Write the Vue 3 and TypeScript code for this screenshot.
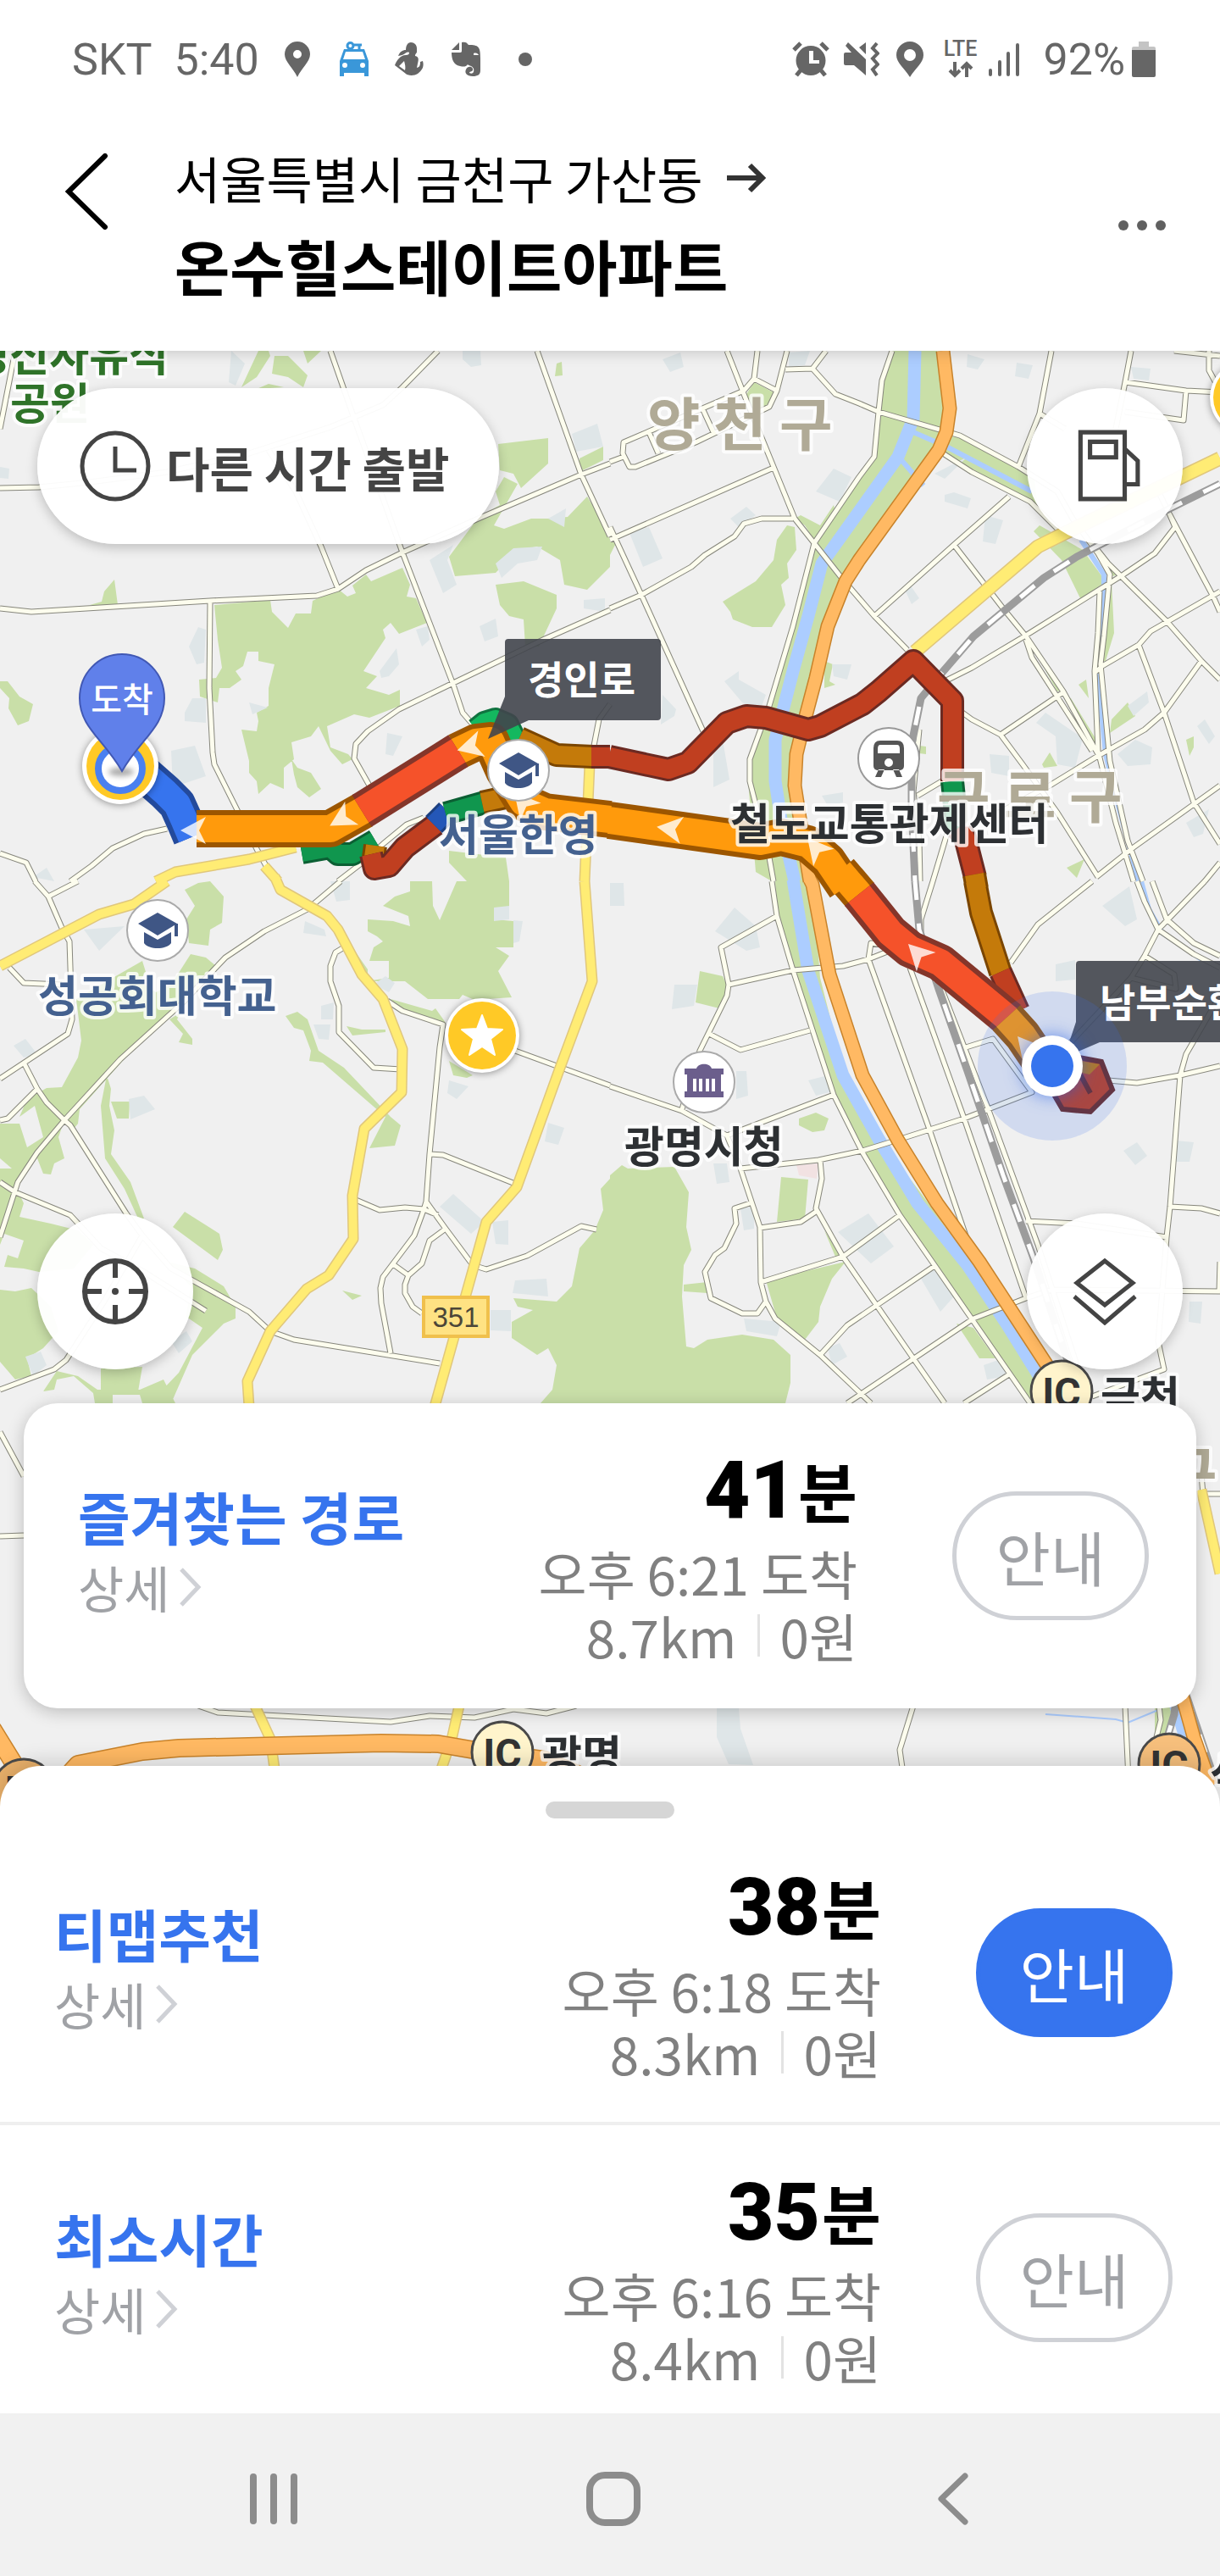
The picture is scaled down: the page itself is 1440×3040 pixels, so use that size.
<script setup lang="ts">
interface Option {
  id: string
  name: string
  minutes: string
  arrival: string
  distance: string
  fare: string
  primary: boolean
}
interface Segment {
  d: string
  fill: string
  edge: string
}
interface Place {
  x: number
  y: number
  text: string
  kind: string
}

const favourite: Option = {
  id: 'favourite', name: '즐겨찾는 경로', minutes: '41', arrival: '오후 6:21 도착', distance: '8.7km', fare: '0원', primary: false,
}
const options: Option[] = [
  { id: 'recommended', name: '티맵추천', minutes: '38', arrival: '오후 6:18 도착', distance: '8.3km', fare: '0원', primary: true },
  { id: 'fastest', name: '최소시간', minutes: '35', arrival: '오후 6:16 도착', distance: '8.4km', fare: '0원', primary: false },
]

// Each map tile stores its own local units; a projector turns "x,y x,y | x,y ..." into path data.
const tile = (ox: number, oy: number, sx: number, sy: number) => (lines: string): string =>
  lines
    .split('|')
    .map((line) => 'M' + line.trim().split(/\s+/).map((pair) => {
      const [x, y] = pair.split(',').map(Number)
      return `${Math.round(ox + x / sx)},${Math.round(oy + y / sy)}`
    }).join('L'))
    .join('')

const nw = tile(0, 400, 2.178, 2.45)
const ne = tile(720, 400, 2.178, 2.45)
const sw = tile(0, 1040, 2.178, 2.45)
const se = tile(720, 1040, 2.178, 2.45)
const bl = tile(0, 1640, 2.178, 3)
const br = tile(720, 1640, 2.178, 3)

const parks = [
  nw('695,50 660,110 620,140 650,70 665,34 690,34|705,50 740,50 790,105 780,140 740,110 700,100|780,34 825,34 790,72|690,130 730,140 660,145|295,697 302,770 230,770 262,760 268,730|0,990 20,990 50,1035 85,1055 75,1105 45,1118 22,1068 25,1040 0,1010|550,770 695,755 700,790 740,835 760,795 800,795 803,757 868,722 893,745 915,735 905,712 940,680 955,700 1035,662 1055,710 1045,745 1070,750 1098,820 1025,852 1005,820 985,840 990,865 935,960 970,975 940,1010 1000,1030 1027,1015 1027,1060 950,1095 910,1085 840,1120 850,1180 895,1200 905,1215 880,1230 850,1190 820,1120 800,1150 750,1165 755,1215 730,1240 730,1300 695,1285 665,1315 660,1280 640,1255 640,1220 620,1130 660,1135 665,1105 660,1080 690,1060 690,1010 705,940 665,930 665,905 635,905 625,945 605,960 620,985 590,1010 565,1010 560,1050 515,1035 512,985 555,980 570,950 560,870|750,1215 765,1240 800,1255 825,1300 795,1325 765,1295 755,1260|1280,305 1410,287 1410,360 1340,430 1320,390 1285,380|1490,345 1550,310 1550,350 1490,385|1180,590 1230,515 1285,480 1275,440 1295,400 1330,420 1270,540 1295,550 1365,520 1410,520 1460,515 1510,455 1568,560 1568,660 1510,725 1450,710 1440,640 1380,600 1330,610 1275,675 1170,685 1155,630|1275,710 1345,700 1430,740 1432,780 1385,890 1350,890 1345,810 1310,800 1285,770|1430,70 1445,65 1447,105 1427,108|1155,1480 1300,1500 1310,1568 1200,1568 1155,1515'),
  ne('725,34 700,120 690,210 680,340 640,400 525,590 470,830 410,1060 360,1215 355,1280 375,1540 415,1568 500,1568 490,1530 470,1290 500,1100 565,840 600,700 640,640 855,320 880,260 865,180 840,34|290,760 375,700 420,640 430,580 455,540 475,545 480,610 455,650 460,690 440,710 450,770 415,833 365,833 315,810 310,790|370,125 420,155 400,200 370,220 350,160|490,510 540,540 575,480 580,500 525,580 500,540 475,520|870,280 910,290 1090,390 1100,490 1020,440 930,385 860,330|1090,555 1105,540 1215,610 1275,700 1210,755 1160,640|1290,700 1295,850 1275,930 1262,930|1290,1100 1330,1050 1350,1090 1285,1140|1110,1230 1130,1195 1150,1235 1115,1240|1480,1160 1500,1150 1500,1180 1490,1205|1175,1530 1220,1505 1200,1558|0,585 15,590 0,625|550,930 572,940 565,990 580,1000 550,1010|1205,1000 1225,985 1230,1040|1085,890 1105,915 1165,1015 1150,1020|1170,1035 1185,1040 1250,1160 1245,1180|795,1175 812,1178 812,1200 795,1198|1280,655 1305,680 1280,690'),
  sw('475,25 510,5 540,0 575,45 570,120 540,140 535,185 485,180 480,110 500,70|365,230 375,262 360,290 400,320 440,300 490,210 530,220 555,245 530,275 330,500 205,660 200,700 190,715 165,690 150,740 165,800 140,815 130,848 110,845 95,800 60,830 40,880 60,930 50,970 130,990 200,1010 240,1050 190,1120 100,1130 60,1120 10,1115 20,1080 45,1090 60,1040 10,1020 0,1050 0,830 30,830 0,800 0,700 50,700 70,770 110,740 90,650 50,680 70,630 120,597 160,595 200,510 210,460 195,340 320,260|435,400 465,380 455,400 495,455 495,473 460,465 470,440|275,560 285,600 280,650 295,720 285,790 335,870 370,975 355,975 320,890 270,800 260,650|285,637 333,637 330,685 300,685|475,955 565,1020 572,1065 560,1095 445,1000|430,1100 500,1120 575,1170 605,1230 605,1265 575,1280 495,1370 440,1508 400,1508 410,1480 460,1420 520,1290 480,1260 490,1170|0,1180 40,1185 80,1175 130,1230 150,1300 110,1350 70,1380 80,1430 40,1440 0,1390|260,1408 365,1405 355,1475 260,1480|145,1415 200,1430 250,1470 360,1470 420,1440 450,1508 365,1508 360,1485 290,1485 290,1508 245,1508 240,1480 190,1430 145,1440 140,1470 110,1475|735,390 765,378 790,400 820,490 885,540 1005,680 1030,705 1015,765 950,772 990,680 830,525 795,520 800,490 780,430 755,425|890,420 930,428 990,428 990,435 905,445|915,205 945,255 945,280 920,240|1005,340 1110,375 1120,368 1145,410 1030,370|1055,0 1110,0 1112,70 1130,112 1175,0 1310,0 1310,75 1270,80 1270,110 1320,115 1320,190 1275,190 1308,215 1280,260 1315,335 1220,342 1190,328 1180,340 1100,340 1040,290 940,290 1000,280 1000,230 950,230 960,190 985,175 970,160 945,145 945,110 1010,115 1055,130 1050,100 985,70 1015,45 1055,30|1155,520 1215,560 1200,568 1165,560|1568,860 1545,890 1550,950 1530,1010 1490,1060 1470,1170 1430,1215 1320,1205 1330,1230 1370,1240 1315,1275 1315,1320 1380,1370 1410,1350 1430,1400 1420,1470 1390,1508 1568,1508|880,1183 930,1198 905,1210'),
  se('425,0 430,100 470,250 575,620 650,785 745,970 835,1115 940,1270 1080,1508 1150,1480 1100,1400 900,1060 820,930 690,740 600,540 540,280 520,0|0,850 30,820 45,830 165,825 203,900 195,1000 210,1065 190,1110 185,1200 195,1345 215,1350 250,1325 340,1310 420,1325 465,1370 465,1450 450,1508 0,1508|400,1155 605,1100 570,1150 540,1230 535,1275 500,1325 430,1265|440,855 510,862 500,975 430,985|230,260 290,275 305,310 290,370 220,350|485,685 530,670 562,685 550,720 520,725 485,705|890,1280 935,1290 990,1380 950,1380|190,1165 250,1160 250,1190 190,1185|550,1010 595,1085 580,1085'),
  br('1400,1120 1460,1120 1440,1230 1400,1230'),
].join('')

const blocks = [
  nw('595,34 630,70 605,135 588,125|1190,34 1235,34 1237,75 1210,82 1190,60|1470,275 1535,245 1550,310 1480,325|1105,640 1165,595 1150,640 1175,710 1140,735|1275,650 1320,605 1395,600 1380,640 1330,650 1290,690|510,832 530,840 525,935 505,940 485,890|1232,830 1275,808 1280,860 1245,875|1500,755 1555,750 1555,790 1500,780|440,1190 500,1175 530,1265 445,1295|975,960 1020,895 1025,940 1000,975 980,980|640,1050 688,1065 650,1085|995,1140 1035,1150 1010,1205 990,1200|475,1080 495,1040 530,1040 530,1110 475,1105|1070,840 1100,830 1105,870 1085,890|0,370 25,375 22,405 0,403|85,1555 120,1530 140,1568|1410,520 1455,490 1450,545'),
  ne('135,60 180,40 190,80 155,95|920,45 962,60 945,88 918,80|1045,68 1087,75 1075,115 1040,108|575,375 620,400 590,470 530,440|860,450 885,443 928,460 920,490 860,470|965,510 1010,525 990,592 958,585|50,560 100,545 135,635 85,658|310,520 350,485 375,510 330,545|755,720 770,710 795,750 775,768|295,990 330,960 330,985 400,1030 385,1075 340,1050|265,1190 290,1160 308,1275 265,1295|1095,1110 1120,1080 1215,1155 1195,1240 1150,1230 1145,1150|1330,1060 1380,1020 1385,1050 1345,1090|1480,1400 1540,1360 1525,1430 1500,1440|975,1200 1025,1205 1025,1265 980,1255|135,1030 170,1070 165,1090 130,1115|570,940 620,940 610,985 575,975|545,1320 600,1310 600,1340 560,1350|1340,80 1390,85 1385,120 1345,115|1510,1120 1530,1100 1555,1150 1540,1170|1305,1200 1350,1160 1395,1180 1390,1230 1330,1235|460,40 515,34 500,75 460,80|835,390 920,340 860,405'),
  sw('215,140 320,130 255,200|1130,940 1165,905 1245,985 1210,1020|1270,75 1310,70 1310,110 1270,115|1155,575 1205,592 1175,630 1150,612|1265,985 1307,980 1307,1050 1275,1048|1325,1155 1405,1150 1410,1200 1318,1190|1262,1240 1313,1240 1313,1300 1262,1298|1410,698 1450,712 1435,762 1400,752|805,415 850,415 845,458 820,455|330,630 370,620 398,660 335,688|960,300 990,275 1015,295 1000,320|35,475 65,455 95,500 60,510|65,1375 105,1360 120,1400 85,1430|785,115 835,140 838,160 780,150|440,1330 480,1300 495,1330 460,1365|825,360 858,350 855,400 825,400|850,0 900,0 900,55 865,60|1320,112 1343,115 1335,175 1320,178'),
  se('320,75 375,130 385,190 350,200 270,145|0,5 35,5 38,70 0,70|165,300 225,300 215,360 160,370|585,1015 665,960 730,1055 670,1105|800,1150 835,1115 885,1200 850,1245|1265,70 1335,15 1355,110 1325,130|1145,240 1195,228 1195,285 1145,290|1320,780 1355,755 1380,795 1350,820|1455,750 1500,755 1490,810 1455,810|1490,1215 1522,1215 1518,1280 1488,1275|345,1265 440,1275 430,1315 350,1300|325,550 350,548 355,620 325,630|510,575 560,560 565,610 530,620|265,815 300,815 308,870 275,875|960,1400 1010,1380 1020,1430 970,1440|560,1350 590,1335 610,1375 570,1400|335,945 370,940 370,1005 345,1010'),
  br('275,1128 330,1128 335,1200 368,1330 305,1325 275,1230'),
].join('')

const streets = [
  nw('40,34 0,260|0,430 100,428 230,415 430,385 640,330 850,255 985,190 1035,140 1125,34|850,34 908,222 1035,618 1165,1000 1190,1080 1215,1115|1380,34 1495,392 1568,570|0,778 80,790 540,757 815,743 868,722 940,668 1035,618 1240,515 1495,392 1568,360|690,320 760,440 825,600 868,722|541,757 538,1010 546,1195 550,1230 660,1475 690,1535|1568,785 1400,868 1165,995 1025,1070 945,1135 915,1170 911,1212 950,1290|1568,1055 1540,1100 1527,1175|430,1415 370,1432 290,1472 235,1525 180,1568|0,1487 68,1515 92,1568|1090,1385 1045,1405 985,1460 925,1520 870,1568'),
  ne('725,34 700,120 690,210 680,340 640,400 525,590 470,830 410,1060 360,1215 360,1280 410,1500 420,1568|300,34 345,160 475,520 525,590 600,695 680,800 765,900|380,34 370,115 430,150|370,115 345,150 35,300 32,330 50,370 65,370 220,300 410,195 430,150 455,34|450,88 520,86 580,160 640,185 690,210 900,280 1050,370 1150,440 1190,520 1255,620|520,86 555,34|240,205 265,270|100,270 125,330|0,355 35,340|855,330 930,385 1080,470 1160,560|420,372 0,580|0,545 80,740 240,1135|0,780 80,740 210,660 245,625 320,570 345,535 390,520 470,520|1025,455 885,595 680,800|885,595 1010,780 1070,860 1165,1020 1255,1200|1135,34 1105,215 1050,370|1105,215 1170,260|1340,34 1325,125 1300,260|1325,125 1480,150 1568,155|1480,150 1475,235 1325,210|1540,34 1540,90 1568,150|1450,34 1568,50|1440,510 1453,545 1400,620 1320,680 1065,860 930,950 860,990|1240,590 1280,650 1430,815 1520,930 1568,985|1400,420 1440,510 1550,745 1568,790|1568,730 1390,845 1360,885 1265,945 1245,965|1255,620 1285,680 1270,860 1260,940 1285,1220 1330,1450 1370,1568|1258,730 1255,850 1245,960 1255,1190 1300,1400 1345,1568|1360,885 1425,1080 1500,1340 1568,1460|1520,930 1425,1080 1375,1130 1255,1205 1130,1290 1000,1370|1005,1145 1165,1022|905,1080 930,1100 1005,1145 1060,1230 1150,1370 1255,1555|1568,1290 1345,1470 1250,1555|790,1320 860,1275|1070,870 1085,920 1240,1190|795,1130 780,1310 795,1450 798,1568|1568,1515 1530,1568|870,1420 830,1568'),
  sw('90,0 125,45 160,135 178,175 185,400 175,440 0,570|125,45 200,0|25,250 60,293 160,300|60,525 95,600 120,640 165,690 180,705 325,960 365,1025 440,1120 640,1245 695,1300 755,1325 1130,1393|95,600 20,685 0,690|875,0 790,80 680,145 580,220 470,350 310,515 165,690 95,785 45,870 0,1030|0,870 40,900 180,965 260,1060 370,1130 530,1243|0,1470 140,1410 170,1385 270,1210 365,1025|885,190 862,205 850,245 850,290 872,360 872,435 960,540 1030,543|995,345 1035,375 1140,415 1130,480 1105,790 1095,925 1090,950 1065,1025 985,1145 978,1175 980,1220 1003,1365|1105,790 1140,792 1325,875|915,920 975,950 1040,943 1090,947 1125,965|1095,925 1145,1005 1215,1110 1250,1122 1355,1083 1495,998 1533,1006|1145,1005 1105,1040 1085,1105 1050,1140 1040,1165 1040,1190 1060,1230 1085,1250|1010,1108 1050,1140|1325,490 1568,590'),
  se('415,0 430,100 470,258 575,618 650,785 745,965 835,1110 1080,1508|430,100 285,190 305,300 300,330 230,490 185,660|305,300 470,258 600,245 665,225 740,190|255,440 335,488 515,430|0,592 185,665 300,735 575,618|300,735 335,830 385,1000 387,1160 400,1215 425,1265 540,1370 670,1508|335,830 535,805 650,780 735,750 910,685 1085,610 985,455 915,480|540,805 545,860 530,945 600,1085 780,1380 860,1508|360,930 320,945 325,990 295,1060 270,1080 245,1130 260,1205 340,1250 380,1250 400,1215|385,1003 490,985 530,955|387,1160 600,1085 745,965|835,1112 610,1285 540,1370|610,1508 935,1265 1070,1205 1135,1180 1568,1185|1025,1425 910,1508|740,190 670,180 665,225 820,710 925,1060|770,250 910,685 1070,1205|830,0 800,110 800,170|845,290 970,650 1100,1050 1200,1400|1070,983 1200,990 1430,1030|1355,0 1375,60 1410,140 1500,210 1568,250|1530,0 1410,140 1375,215 1340,280 1180,470|1375,215 1450,270 1455,310 1340,280|1240,0 1100,125 1030,235|1280,575 1355,583 1465,560 1568,535|1568,330 1480,500 1465,560 1440,940 1430,1030 1410,1330 1425,1410 1240,1490|1440,940 1520,945 1568,960|1568,1100 1565,1185|1395,0 1430,110 1500,180 1568,215'),
  bl('0,150 60,305|0,520 60,515|510,1120 560,1142 1005,1175 1105,1155 1220,1162 1320,1132 1405,1145 1480,1120'),
  br('1520,300 1525,370 1568,370|780,1120 745,1275 755,1380|1325,1120 1332,1380|1412,1120 1415,1170 1405,1230'),
].join('')

const avenues = [
  nw('400,1568 450,1542 640,1505 760,1470|680,1525 715,1568|1515,1230 1503,1568'),
  sw('430,0 345,65 255,95 0,245|705,-15 720,25 840,100 870,140 930,270 985,340 1035,485 1032,610 937,715 905,910 908,1035 845,1140 788,1178 695,1300 635,1445 640,1520|1503,0 1522,290 1440,540 1328,885 1250,985 1118,1520'),
  bl('655,1120 695,1235 705,1340 700,1380|1180,1120 1160,1240 1130,1360'),
  br('1520,355 1568,650'),
].join('')
const boulevard = ne('785,905 1100,600 1170,560 1568,345')

const highways = [
  ne('855,34 873,200 865,270 845,320 640,640 605,700 560,830 530,980 500,1100 480,1200 475,1290 500,1480 515,1568'),
  se('515,-5 520,10 565,270 650,560 740,750 840,930 950,1100 1130,1410'),
  br('1440,960 1475,1100 1500,1230 1545,1400'),
].join('')
const expressways = bl('150,1400 200,1325 365,1280 460,1270 980,1250 1125,1255 1240,1280 1400,1310 1500,1370|-20,1200 60,1380')

const river = [
  ne('783,34 780,230 740,340 545,650 510,800 470,960 425,1160 425,1280 445,1420 475,1568'),
  se('470,-5 510,260 600,560 690,745 790,930 920,1110 1020,1280 1120,1460'),
  br('1450,1100 1485,1260'),
].join('')
const creeks = [
  ne('780,270 865,310 1085,440|1210,580 1270,680 1270,740 1255,900 1255,980 1275,1200 1305,1340 1360,1568|750,350 805,425'),
  se('1365,0 1385,80 1420,150 1520,225'),
].join('')
const brooks = br('1120,1150 1300,1168 1330,1180 1410,1135')
const rails = [
  ne('1568,420 1440,490 1200,630 1115,690 935,860 850,970 800,1040 775,1170 775,1350 785,1568'),
  se('785,0 795,140 845,310 920,550 1010,850 1090,1090 1180,1400'),
  br('1460,1040 1450,1150 1430,1240|1480,1080 1560,1400'),
].join('')

const RED = { fill: '#c03f20', edge: '#6b2a22' }
const AMBER = { fill: '#c47a0a', edge: '#7a4500' }
const GREEN = { fill: '#10964e', edge: '#0b5f33' }
const alternate: Segment[] = [
  { d: nw('775,1485 850,1470 870,1490 905,1490 965,1450'), ...GREEN },
  { d: nw('965,1465 960,1500'), ...AMBER },
  { d: nw('955,1490 962,1532 1000,1525 1040,1470 1120,1405'), ...RED },
  { d: nw('1115,1405 1150,1365'), fill: '#2457b8', edge: '#1c3f80' },
  { d: nw('1145,1372 1245,1340'), ...GREEN },
  { d: nw('1240,1340 1310,1322'), ...AMBER },
  { d: nw('1225,1130 1245,1110 1275,1100 1305,1115 1320,1150 1300,1190'), fill: '#14b85f', edge: '#0f7340' },
  { d: nw('1335,1155 1430,1203 1525,1207'), ...AMBER },
  { d: nw('1520,1207 1568,1207') + ne('-2,1207 150,1245 200,1225 300,1110 350,1090 400,1095 510,1130 540,1120 650,1055 690,1020 780,930 880,1045 880,1280'), ...RED },
  { d: ne('880,1280 892,1420'), ...GREEN },
  { d: ne('892,1415 912,1440 938,1555'), ...RED },
  { d: ne('936,1548 944,1590') + se('938,0 955,90 1005,265'), ...AMBER },
  { d: se('1005,262 1050,375'), ...RED },
]
const ORANGE = { fill: '#ff9a0c', edge: '#9c5600' }
const SCARLET = { fill: '#f5522a', edge: '#84362a' }
const selected: Segment[] = [
  { d: nw('370,1258 425,1310 455,1345 475,1395 492,1440'), fill: '#3674ee', edge: '#234a9c' },
  { d: nw('505,1417 850,1415 935,1362'), ...ORANGE },
  { d: nw('1175,1192 1225,1165 1262,1162 1295,1250 1345,1340 1400,1368 1568,1390') + ne('-2,1391 385,1453 440,1440 510,1460 560,1510 605,1585') + se('590,-30 642,40'), ...ORANGE },
  { d: nw('930,1365 1178,1190'), ...SCARLET },
  { d: se('640,37 720,150 770,195 850,235 1025,400'), ...SCARLET },
  { d: se('1020,395 1060,445 1110,530'), ...ORANGE },
]
const arrows = [
  { x: 230, y: 980, r: 0 },
  { x: 404, y: 966, r: -30 },
  { x: 556, y: 881, r: -15 },
  { x: 618, y: 948, r: 50 },
  { x: 792, y: 978, r: 8 },
  { x: 964, y: 1002, r: 50 },
  { x: 1084, y: 1126, r: 45 },
  { x: 1212, y: 1236, r: 50 },
]
const places: Place[] = [
  { x: 199, y: 438, text: '경신자유식', kind: 'park end' },
  { x: 12, y: 495, text: '공원', kind: 'park' },
  { x: 764, y: 526, text: '양 천 구', kind: 'district' },
  { x: 1106, y: 965, text: '구 로 구', kind: 'district' },
  { x: 1374, y: 1764, text: '구', kind: 'district' },
  { x: 862, y: 991, text: '철도교통관제센터', kind: 'poi' },
  { x: 518, y: 1004, text: '서울한영', kind: 'school' },
  { x: 45, y: 1194, text: '성공회대학교', kind: 'school' },
  { x: 737, y: 1372, text: '광명시청', kind: 'poi' },
  { x: 1299, y: 1667, text: '금천', kind: 'poi' },
  { x: 640, y: 2091, text: '광명', kind: 'poi' },
  { x: 1428, y: 2112, text: '석수', kind: 'poi' },
]
const junctions = [
  { x: 1253, y: 1642, fill: '#fff4cc' },
  { x: 593, y: 2068, fill: '#fff4cc' },
  { x: 28, y: 2112, fill: '#e9b06a' },
  { x: 1380, y: 2082, fill: '#f6bf7c' },
]
const stars = [{ x: 569, y: 1222 }, { x: 1472, y: 469 }]
const schools = [{ x: 612, y: 909 }, { x: 186, y: 1098 }]
</script>

<template>
  <div class="screen">
    <div class="status">
      <span class="carrier">SKT</span>
      <span class="clock">5:40</span>
      <svg class="s-pin" width="30" height="42" viewBox="0 0 30 42"><path fill-rule="evenodd" d="M15 0a15 15 0 0 1 15 15c0 9-10 16-15 27C10 31 0 24 0 15A15 15 0 0 1 15 0zm0 10a5 5 0 1 0 0 10 5 5 0 0 0 0-10z" /></svg>
      <svg class="s-car" width="34" height="42" viewBox="0 0 34 42"><path fill="none" stroke="#3a97d9" stroke-width="3" d="M9 5a3.500 3.500 0 1 0 7 0 3.500 3.500 0 0 0-7 0M15 4h11M23 4v5" /><path fill="#3a97d9" fill-rule="evenodd" d="M5 9h24l5 14v18h-5v-4H5v4H0V23zM7 12 4 21h26l-3-9zM6 25a3 3 0 1 0 0 6 3 3 0 0 0 0-6zm21 0a3 3 0 1 0 0 6 3 3 0 0 0 0-6z" /></svg>
      <svg class="s-person" width="36" height="42" viewBox="0 0 36 42"><path d="M19 1c4 0 7 3 7 7v4c0 2-2 2-2 5 5 1 4 5 3 9l-1 5c4-1 4-4 4-7l3-1c2 7-1 11-6 15-4 3-13 2-14 0L0 28c2-5 6-12 13-12 3 0 4-1 4-3-4-2-4 3-13 4 2-5 5-7 9-7 0-5 2-9 6-9zM11 23l-6 6 7 5c1-4 0-7-1-11z" /></svg>
      <svg class="s-elephant" width="36" height="42" viewBox="0 0 36 42"><path d="M10 1v9H1zM13 1c4-1 6 0 8 3 12 0 14 2 14 16v14c0 5-3 7-9 7-7 0-10-4-8-8 2-5 9-4 8 1-1 2-4 1-4 3 4 2 6-1 5-5-2-4-5-3-7-5-2 3-5 3-9 2C3 28 1 20 1 13h10c2 0 2-1 2-3zM27 14v2h6c-1-2-3-3-6-2z" /></svg>
      <svg class="s-dot" width="16" height="16" viewBox="0 0 16 16"><circle cx="8" cy="8" r="8" /></svg>
      <div class="status-right">
        <svg width="44" height="42" viewBox="0 0 44 42"><path fill-rule="evenodd" d="M22 5a17 17 0 1 1 0 35 17 17 0 0 1 0-35zm-2 6v15h12v-4h-7V11z" /><path stroke="#666" stroke-width="5" d="M2 10 10 2M42 10 34 2M10 34l-5 6M34 34l5 6" /></svg>
        <svg class="s-mute" width="42" height="42" viewBox="0 0 42 42"><path d="M0 15q0-2 2-2h7l-7-8 3-4 21 20v19L12 28H2q-2 0-2-2zM18 7l8-6v14z" /><path fill="none" stroke="#666" stroke-width="4" d="m39 2-5 6 6 6-6 6 6 7-6 6 5 7" /></svg>
        <svg class="s-pin2" width="32" height="42" viewBox="0 0 32 42"><path fill-rule="evenodd" d="M16 0a16 16 0 0 1 16 16c0 9-9 15-16 26C9 31 0 25 0 16A16 16 0 0 1 16 0zm0 9a7 7 0 1 0 0 14 7 7 0 0 0 0-14z" /></svg>
        <div class="lte"><span>LTE</span><svg width="30" height="20" viewBox="0 0 30 20"><path fill="none" stroke="#666" stroke-width="4" d="M8 1v15M2 11l6 6 6-6M22 19V4M16 9l6-6 6 6" /></svg></div>
        <svg class="s-signal" width="36" height="42" viewBox="0 0 36 42"><path stroke="#666" stroke-width="4" stroke-linecap="round" d="M2 34v5M13 24v15M23 14v25M34 4v35" /></svg>
        <span class="percent">92%</span>
        <svg class="s-battery" width="28" height="42" viewBox="0 0 28 42"><path fill="#c4c4c4" d="M8 0h12v6h6q2 0 2 2v4H0V8q0-2 2-2h6z" /><path d="M0 10h28v30q0 2-2 2H2q-2 0-2-2z" /></svg>
      </div>
    </div>

    <header class="trip">
      <button class="back" aria-label="뒤로"><svg width="52" height="90" viewBox="0 0 52 90"><path fill="none" stroke="#000" stroke-width="6" stroke-linecap="round" d="M48 3 5 45l43 42" /></svg></button>
      <div class="places">
        <p class="origin">서울특별시 금천구 가산동<svg width="46" height="36" viewBox="0 0 46 36"><path fill="none" stroke="#333" stroke-width="6" d="M0 18h40M27 3l15 15-15 15" /></svg></p>
        <h1>온수힐스테이트아파트</h1>
      </div>
      <button class="more" aria-label="더보기"><svg width="58" height="14" viewBox="0 0 58 14"><circle cx="7" cy="7" r="6" /><circle cx="29" cy="7" r="6" /><circle cx="51" cy="7" r="6" /></svg></button>
    </header>

    <main class="map">
      <svg class="canvas" viewBox="0 414 1440 1718" preserveAspectRatio="xMidYMin slice" role="img" aria-label="경로 지도">
        <path :d="parks" fill="#c9dfa8" />
        <path :d="blocks" fill="#dfe6e8" />
        <path d="M940 1375l26-2-2 18-21-4z" fill="#f2e2e2" />
        <g fill="none" stroke-linejoin="round">
          <path :d="creeks" stroke="#accdff" stroke-width="6" />
          <path :d="brooks" stroke="#accdff" stroke-width="2" />
          <path :d="river" stroke="#accdff" stroke-width="15" />
          <path :d="streets" stroke="#86867c" stroke-width="7" />
          <path :d="streets" stroke="#fdfdee" stroke-width="5" />
          <path :d="boulevard" stroke="#e0c77c" stroke-width="17" />
          <path :d="boulevard" stroke="#ffec74" stroke-width="14" />
          <path :d="rails" stroke="#9c9c9c" stroke-width="9" />
          <path :d="rails" stroke="#fff" stroke-width="5" stroke-dasharray="22 28" />
          <path :d="avenues" stroke="#e0c77c" stroke-width="13" />
          <path :d="avenues" stroke="#ffec74" stroke-width="10" />
          <path :d="highways" stroke="#c8832b" stroke-width="17" />
          <path :d="highways" stroke="#ffb963" stroke-width="14" />
          <path :d="expressways" stroke="#c8832b" stroke-width="22" />
          <path :d="expressways" stroke="#ffb963" stroke-width="19" />
          <g v-for="(s, i) in alternate" :key="'a' + i">
            <path :d="s.d" :stroke="s.edge" stroke-width="28" />
            <path :d="s.d" :stroke="s.fill" stroke-width="22" />
          </g>
        </g>
        <path d="M1243 1290l11 19 33 3 26-26-13-33-26-5z" fill="#c03f20" stroke="#6b2a22" stroke-width="6" />
        <path d="M1270 1251l28 5-12 12-18-4z" fill="#c47a0a" />
        <path d="M1275 1268l12 22" stroke="#6b2a22" stroke-width="6" />
        <g fill="none" stroke-linejoin="round">
          <g v-for="(s, i) in selected" :key="'s' + i">
            <path :d="s.d" :stroke="s.edge" stroke-width="44" />
            <path :d="s.d" :stroke="s.fill" stroke-width="32" />
          </g>
        </g>
        <path v-for="(a, i) in arrows" :key="'w' + i" d="M-17 0 13-16 5 0l8 16z" fill="#fff" fill-opacity=".8" :transform="`translate(${a.x} ${a.y}) rotate(${a.r})`" />

        <g v-for="j in junctions" :key="'j' + j.x">
          <circle :cx="j.x" :cy="j.y" r="36" :fill="j.fill" stroke="#4a4a4a" stroke-width="3" />
          <text class="junction" :x="j.x" :y="j.y + 18">IC</text>
        </g>
        <text v-for="p in places" :key="p.text + p.x" class="place" :class="p.kind" :x="p.x" :y="p.y">{{ p.text }}</text>

        <rect x="500" y="1531" width="76" height="46" fill="#ffe283" stroke="#f0c04c" stroke-width="4" />
        <text class="road-no" x="538" y="1566">351</text>

        <g v-for="s in schools" :key="'sc' + s.x" :transform="`translate(${s.x} ${s.y})`">
          <circle r="36" fill="#fff" stroke="#aaa" stroke-width="2" />
          <path fill="#3f5685" d="M0-21 23-8 0 6-23-8zM-16 2 0 11 16 2v13c-6 8-26 8-32 0z" />
          <path fill="none" stroke="#3f5685" stroke-width="4" d="M22-8V7" />
        </g>
        <g transform="translate(1049 895)">
          <circle r="36" fill="#fff" stroke="#999" stroke-width="2" />
          <path fill="#555" fill-rule="evenodd" d="M-10-21h20q8 0 8 9V9q0 5-6 5h-24q-6 0-6-5v-21q0-9 8-9zM-10-16q-3 0-3 5v5h26v-5q0-5-3-5zM0 0a5 5 0 1 0 0 10 5 5 0 0 0 0-10zM-12 13h7l-4 9h-7zM12 13H5l4 9h7z" />
        </g>
        <g transform="translate(831 1277)">
          <circle r="36" fill="#fff" stroke="#aaa" stroke-width="2" />
          <path fill="#6b5e8c" d="M-9-16C-7-23 7-23 9-16h14v7h-3V11h3v7h-46v-7h3V-9h-3v-7z" />
          <path stroke="#fff" stroke-width="4" d="M-11-4V11M-4-4V11M4-4V11M11-4V11" />
        </g>
        <g v-for="s in stars" :key="'st' + s.x" :transform="`translate(${s.x} ${s.y})`">
          <circle class="lift" r="44" fill="#fff" />
          <circle r="40" fill="#ffc926" />
          <path fill="#fff" stroke="#fff" stroke-width="2" stroke-linejoin="round" d="M0-24 6-8l18 1L10 4l5 19L0 13l-15 10 5-19L-24-7l18-1z" />
        </g>

        <circle class="lift" cx="142" cy="904" r="45" fill="#fff" />
        <circle cx="142" cy="904" r="40" fill="#ffc926" />
        <circle cx="142" cy="907" r="26" fill="#fff" stroke="#4a80f0" stroke-width="8" />
        <ellipse class="soft" cx="143" cy="911" rx="15" ry="5" fill="#aaa" />
        <path fill="#6080ea" stroke="#4158b4" stroke-width="2" d="M144 772c28 0 50 23 50 52 0 34-28 48-50 86-22-38-50-52-50-86 0-29 22-52 50-52z" />
        <text class="pin-text" x="144" y="840">도착</text>

        <path class="tip" d="M600 754h176q4 0 4 4v88q0 4-4 4H624l-48 22 20-50v-64q0-4 4-4z" />
        <text class="tip-text" x="623" y="819">경인로</text>
        <path class="tip" d="M1274 1134h186v96h-162l-42 18 14-42v-68q0-4 4-4z" />
        <text class="tip-text" x="1298" y="1200">남부순환로</text>

        <circle cx="1242" cy="1258" r="88" fill="#3c73ee" fill-opacity=".17" />
        <circle class="glow" cx="1242" cy="1258" r="36" fill="#fff" />
        <circle cx="1242" cy="1258" r="25" fill="#3674ee" />
      </svg>

      <div class="controls">
        <button class="depart"><svg width="84" height="84" viewBox="0 0 84 84"><circle cx="42" cy="42" r="39" fill="none" stroke="#444" stroke-width="5" /><path fill="none" stroke="#444" stroke-width="5" d="M42 19v28h25" /></svg>다른 시간 출발</button>
        <button class="round" aria-label="주유소"><svg width="84" height="88" viewBox="-10 -1 82 86"><path fill="none" stroke="#444" stroke-width="5" d="M3 3h51v77H3zM14 14h30v18H14zM54 22l15 14v27H54" /></svg></button>
      </div>
      <div class="controls lower">
        <button class="round" aria-label="현재 위치"><svg width="80" height="80" viewBox="0 0 80 80"><circle cx="40" cy="40" r="36" fill="none" stroke="#444" stroke-width="6" /><circle cx="40" cy="40" r="4" fill="#444" /><path stroke="#444" stroke-width="6" d="M40 4v20M40 56v20M4 40h20M56 40h20" /></svg></button>
        <button class="round" aria-label="지도 레이어"><svg width="78" height="80" viewBox="0 0 78 80"><path fill="none" stroke="#444" stroke-width="5" d="M39 4 72 30 39 56 6 30zM3 46l36 31 36-31" /></svg></button>
      </div>

      <article class="option favourite">
        <div class="label">
          <h2>{{ favourite.name }}</h2>
          <a href="#detail">상세<svg width="28" height="46" viewBox="0 0 28 46"><path fill="none" stroke="#cfd1d6" stroke-width="5" d="m3 2 20 21L3 44" /></svg></a>
        </div>
        <div class="figures">
          <p class="time"><b>{{ favourite.minutes }}</b>분</p>
          <p>{{ favourite.arrival }}</p>
          <p class="cost"><span>{{ favourite.distance }}</span><span class="bar"></span><span>{{ favourite.fare }}</span></p>
        </div>
        <button class="go">안내</button>
      </article>
    </main>

    <section class="sheet">
      <div class="grip"></div>
      <article v-for="o in options" :key="o.id" class="option">
        <div class="label">
          <h2>{{ o.name }}</h2>
          <a href="#detail">상세<svg width="28" height="46" viewBox="0 0 28 46"><path fill="none" stroke="#cfd1d6" stroke-width="5" d="m3 2 20 21L3 44" /></svg></a>
        </div>
        <div class="figures">
          <p class="time"><b>{{ o.minutes }}</b>분</p>
          <p>{{ o.arrival }}</p>
          <p class="cost"><span>{{ o.distance }}</span><span class="bar"></span><span>{{ o.fare }}</span></p>
        </div>
        <button class="go" :class="{ primary: o.primary }">안내</button>
      </article>
    </section>

    <nav class="keys">
      <button aria-label="최근 앱"><svg width="58" height="62" viewBox="0 0 58 62"><path stroke="#8c8c8c" stroke-width="8" stroke-linecap="round" d="M5 5v52M29 5v52M53 5v52" /></svg></button>
      <button aria-label="홈"><svg width="64" height="64" viewBox="0 0 64 64"><rect x="4" y="4" width="56" height="56" rx="18" fill="none" stroke="#8c8c8c" stroke-width="8" /></svg></button>
      <button aria-label="이전"><svg width="38" height="62" viewBox="0 0 38 62"><path fill="none" stroke="#8c8c8c" stroke-width="7" stroke-linecap="round" stroke-linejoin="round" d="M33 4 5 31l28 27" /></svg></button>
    </nav>
  </div>
</template>

<style>
body { background: #fff; }
</style>

<style scoped>
.screen {
  font-family: "Noto Sans CJK KR", "Noto Sans", sans-serif;
  color: #000;
  background: #fff;
  overflow: hidden;
}
p, h1, h2 { margin: 0; }
svg { display: block; flex: none; }
button {
  display: flex;
  align-items: center;
  justify-content: center;
  padding: 0;
  border: 0;
  background: none;
  font: inherit;
  color: inherit;
}
.status {
  position: relative;
  z-index: 2;
  display: flex;
  align-items: center;
  height: 140px;
  padding: 0 76px 0 85px;
  box-sizing: border-box;
  background: #fff;
  font-family: Roboto, sans-serif;
  font-size: 52px;
  color: #666;
  fill: #666;
}
.clock { margin-left: 26px; }
.s-pin { margin-left: 30px; }
.s-car { margin-left: 35px; }
.s-person { margin-left: 31px; }
.s-elephant { margin-left: 30px; }
.s-dot { margin-left: 44px; }
.status-right { display: flex; align-items: center; margin-left: auto; }
.s-mute { margin-left: 17px; }
.s-pin2 { margin-left: 20px; }
.lte {
  display: flex;
  flex-direction: column;
  align-items: center;
  gap: 4px;
  margin-left: 24px;
  font-size: 25px;
  font-weight: 500;
  line-height: 20px;
}
.s-signal { margin-left: 14px; }
.percent { margin-left: 28px; }
.s-battery { margin-left: 8px; }

.trip {
  position: relative;
  z-index: 1;
  display: flex;
  align-items: flex-start;
  height: 274px;
  padding: 0 63px 0 76px;
  box-sizing: border-box;
  background: #fff;
  box-shadow: 0 2px 16px rgba(0, 0, 0, 0.18);
}
.back { margin-top: 41px; }
.places { flex: 1; padding: 28px 0 0 78px; }
.origin {
  display: flex;
  align-items: center;
  gap: 28px;
  font-size: 59px;
  line-height: 84px;
}
h1 { padding-top: 12px; font-size: 71px; font-weight: 700; line-height: 96px; }
.more { margin-top: 119px; fill: #606060; }

.map {
  position: relative;
  padding: 44px 28px 116px;
  background: #f0f0f0;
}
.canvas { position: absolute; inset: 0; width: 100%; height: 100%; }
.controls {
  position: relative;
  display: flex;
  justify-content: space-between;
  padding: 0 16px;
}
.lower { margin: 790px 0 40px; }
.depart, .round {
  height: 184px;
  border-radius: 92px;
  background: rgba(255, 255, 255, 0.96);
  box-shadow: 0 4px 14px rgba(0, 0, 0, 0.22);
}
.round { width: 184px; }
.depart {
  gap: 18px;
  padding: 0 58px 0 50px;
  font-size: 56px;
  font-weight: 700;
  color: #444;
}

.place {
  font-size: 51px;
  font-weight: 700;
  paint-order: stroke;
  stroke: rgba(255, 255, 255, 0.8);
  stroke-width: 8px;
  stroke-linejoin: round;
}
.poi { fill: #2d3033; }
.school { fill: #44618f; }
.park { fill: #2f7329; }
.end { text-anchor: end; }
.district { fill: #b0aa96; font-size: 68px; }
.junction { font: 700 48px Roboto, sans-serif; fill: #333; text-anchor: middle; }
.road-no { font: 33px "Liberation Sans", sans-serif; fill: #4c4638; text-anchor: middle; }
.lift { filter: drop-shadow(0 1px 4px rgba(0, 0, 0, 0.4)); }
.glow { filter: drop-shadow(0 0 10px rgba(30, 90, 230, 0.6)); }
.soft { filter: blur(3px); }
.pin-text { font-size: 40px; font-weight: 500; fill: #fff; text-anchor: middle; }
.tip { fill: #41454d; fill-opacity: 0.9; }
.tip-text { font-size: 46px; font-weight: 700; fill: #fff; }

.option {
  display: flex;
  align-items: center;
  height: 360px;
  padding: 0 56px 0 64px;
  box-sizing: border-box;
  background: #fff;
  box-shadow: inset 0 -4px #efefef;
}
.favourite {
  position: relative;
  border-radius: 40px;
  box-shadow: 0 4px 20px rgba(0, 0, 0, 0.22);
}
.label { flex: 1; padding-bottom: 12px; }
h2 { margin-bottom: 6px; font-size: 67px; font-weight: 700; line-height: 80px; color: #3674ee; }
.label a {
  display: flex;
  align-items: center;
  gap: 10px;
  font-size: 59px;
  line-height: 76px;
  color: #a0a2a6;
  text-decoration: none;
}
.figures {
  font-size: 62px;
  line-height: 74px;
  text-align: right;
  color: #808080;
}
.time { margin: 4px 0 12px; font-size: 76px; font-weight: 700; line-height: 96px; color: #000; }
.time b { margin-right: 2px; font-family: Roboto, sans-serif; font-size: 94px; }
.cost { display: flex; align-items: center; justify-content: flex-end; gap: 24px; }
.bar { width: 3px; height: 50px; background: #e3e3e3; }
.go {
  width: 232px;
  height: 152px;
  margin-left: 112px;
  border: 5px solid #cfd1d6;
  border-radius: 76px;
  box-sizing: border-box;
  font-size: 70px;
  color: #a0a2a6;
}
.primary { border-color: #3674ee; background: #3674ee; color: #fff; }

.sheet {
  position: relative;
  margin-top: -48px;
  padding-top: 42px;
  border-radius: 48px 48px 0 0;
  background: #fff;
  box-shadow: 0 -6px 24px rgba(0, 0, 0, 0.14);
}
.grip { width: 152px; height: 20px; margin: 0 auto 2px; border-radius: 10px; background: #d6d6d6; }
.sheet .option:last-child { height: 340px; padding-top: 20px; box-shadow: none; }
.keys {
  position: relative;
  display: flex;
  justify-content: center;
  box-sizing: border-box;
  height: 192px;
  padding: 10px 0 0 8px;
  background: #f1f1f1;
}
.keys button { width: 28%; }
</style>
